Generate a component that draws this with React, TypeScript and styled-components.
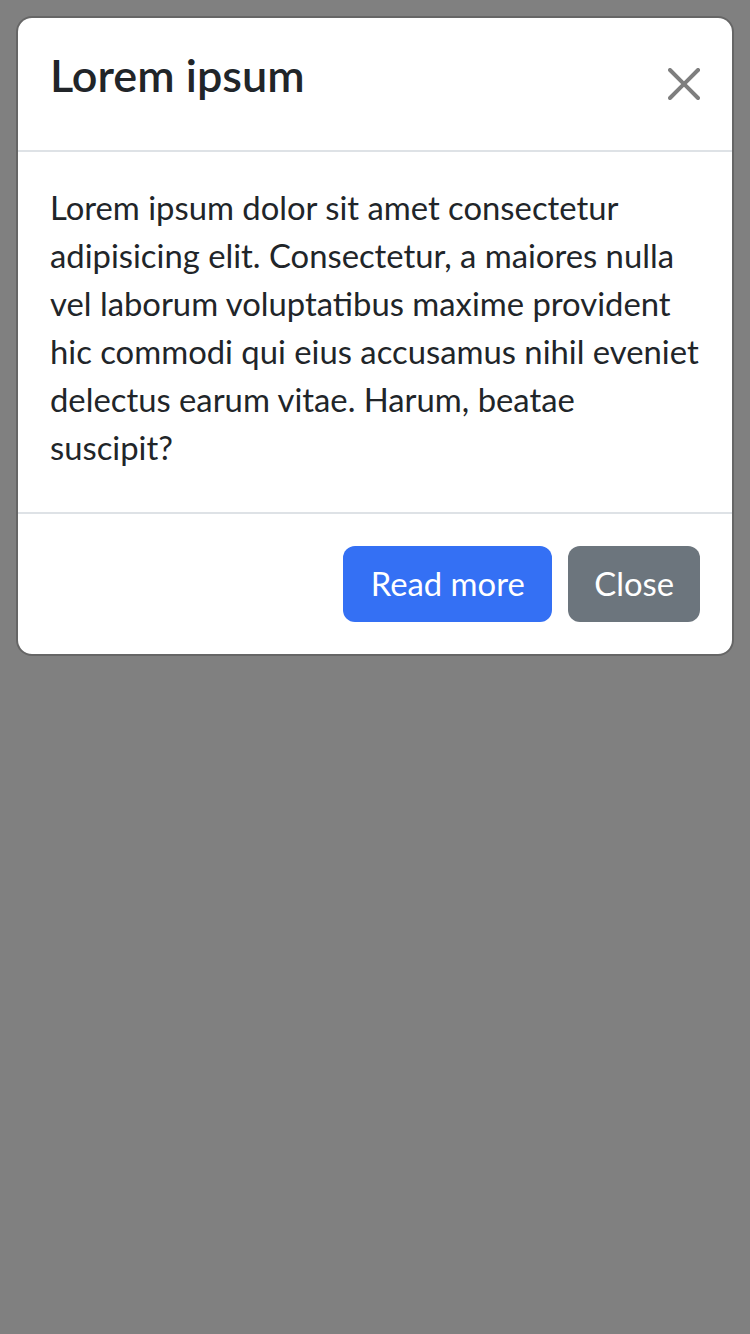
import React from "react";
import styled, { createGlobalStyle } from "styled-components";

const GlobalStyle = createGlobalStyle`
  html, body {
    margin: 0;
    padding: 0;
    background: #808080;
  }
  body {
    font-family: "Lato", "Liberation Sans", sans-serif;
    color: #212529;
    min-height: 1334px;
  }
`;

const Page = styled.div`
  padding: 16px;
`;

const Dialog = styled.div`
  background: #ffffff;
  border: 2px solid rgba(0, 0, 0, 0.2);
  border-radius: 16px;
  background-clip: padding-box;
  display: flex;
  flex-direction: column;
  overflow: hidden;
`;

const Header = styled.div`
  display: flex;
  align-items: flex-start;
  padding: 32px;
  border-bottom: 2px solid #dee2e6;
`;

const Title = styled.h5`
  margin: 0;
  font-size: 45px;
  font-weight: 600;
  line-height: 50px;
  color: #212529;
`;

const CloseButton = styled.button`
  margin: 0 -18px 0 auto;
  width: 68px;
  height: 68px;
  padding: 0;
  border: 0;
  background: transparent;
  display: flex;
  align-items: center;
  justify-content: center;
  cursor: pointer;
  opacity: 0.5;
  svg {
    display: block;
  }
`;

const Body = styled.div`
  padding: 32px 32px 40px;
`;

const Text = styled.p`
  margin: 0;
  font-size: 32.8px;
  line-height: 48px;
  color: #212529;
`;

const Footer = styled.div`
  display: flex;
  justify-content: flex-end;
  align-items: center;
  gap: 16px;
  padding: 32px;
  border-top: 2px solid #dee2e6;
`;

const Button = styled.button<{ $variant: "primary" | "secondary" }>`
  height: 76px;
  padding: 0 ${(p) => (p.$variant === "primary" ? "27.5px" : "26px")};
  border: 0;
  border-radius: 12px;
  font-family: "Lato", "Liberation Sans", sans-serif;
  font-size: 32.8px;
  font-weight: 400;
  line-height: 48px;
  color: #ffffff;
  background: ${(p) => (p.$variant === "primary" ? "#3470f4" : "#6c757d")};
  cursor: pointer;
`;

export default function App() {
  return (
    <>
      <GlobalStyle />
      <Page>
        <Dialog role="dialog">
          <Header>
            <Title>Lorem ipsum</Title>
            <CloseButton aria-label="Close">
              <svg width="32" height="32" viewBox="0 0 16 16" fill="#000">
                <path d="M.293.293a1 1 0 0 1 1.414 0L8 6.586 14.293.293a1 1 0 1 1 1.414 1.414L9.414 8l6.293 6.293a1 1 0 0 1-1.414 1.414L8 9.414l-6.293 6.293a1 1 0 0 1-1.414-1.414L6.586 8 .293 1.707a1 1 0 0 1 0-1.414z" />
              </svg>
            </CloseButton>
          </Header>
          <Body>
            <Text>
              Lorem ipsum dolor sit amet consectetur adipisicing elit. Consectetur, a maiores nulla vel laborum
              voluptatibus maxime provident hic commodi qui eius accusamus nihil eveniet delectus earum vitae.
              Harum, beatae suscipit?
            </Text>
          </Body>
          <Footer>
            <Button $variant="primary">Read more</Button>
            <Button $variant="secondary">Close</Button>
          </Footer>
        </Dialog>
      </Page>
    </>
  );
}
